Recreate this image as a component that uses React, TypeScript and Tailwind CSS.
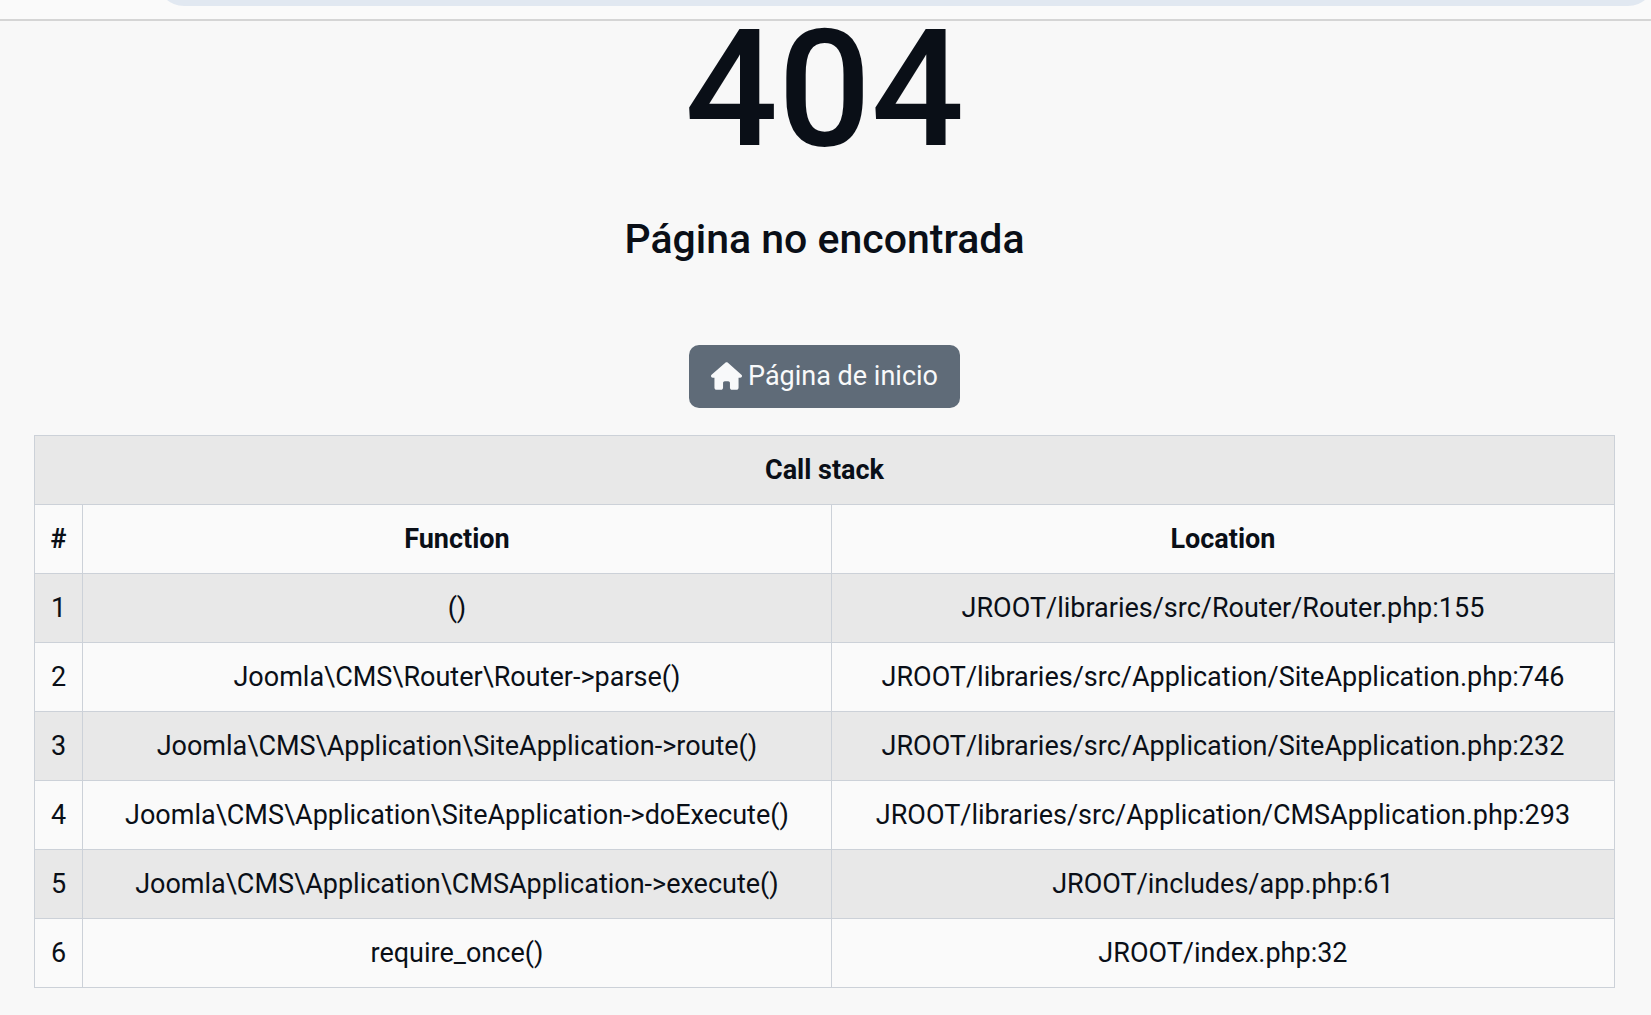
import { FaHouse } from "react-icons/fa6";

const frames = [
  ["()", "JROOT/libraries/src/Router/Router.php:155"],
  ["Joomla\\CMS\\Router\\Router->parse()", "JROOT/libraries/src/Application/SiteApplication.php:746"],
  ["Joomla\\CMS\\Application\\SiteApplication->route()", "JROOT/libraries/src/Application/SiteApplication.php:232"],
  ["Joomla\\CMS\\Application\\SiteApplication->doExecute()", "JROOT/libraries/src/Application/CMSApplication.php:293"],
  ["Joomla\\CMS\\Application\\CMSApplication->execute()", "JROOT/includes/app.php:61"],
  ["require_once()", "JROOT/index.php:32"],
];

const cell = "border border-[#ccd1d8] py-3";

export default function App() {
  return (
    <div className="min-h-screen bg-[#f8f8f8] font-[Roboto,sans-serif] text-[27px] leading-[44px] text-[#0a0f17]">
      <div className="flex h-[21px] items-start overflow-hidden border-b-2 border-[#d5d5d5] bg-[#fafafa] pl-[157px]">
        <div className="-mt-12 -mr-1 h-[54px] grow rounded-full bg-[#e1e8f1]" />
      </div>
      <main className="flex flex-col items-center pr-9 pb-7 pl-[34px] text-center">
        <h1 className="text-[164px] leading-[136px] font-medium">404</h1>
        <h2 className="mt-[57px] text-[41px] leading-[50px] font-medium">Página no encontrada</h2>
        <a href="#" className="mt-[81px] flex h-[63px] items-center gap-1.5 rounded-[10px] bg-[#5f6b78] px-[22px] pb-0.5 text-[#f8f9fa]">
          <FaHouse className="h-7 w-[31px]" />
          Página de inicio
        </a>
        <table className="mt-[27px] w-full table-fixed border-collapse">
          <colgroup>
            <col className="w-12" />
            <col className="w-[47.4%]" />
            <col />
          </colgroup>
          <thead>
            <tr className="bg-[#e8e8e8]">
              <th colSpan={3} className={cell}>Call stack</th>
            </tr>
            <tr className="bg-[#fafafa]">
              <th scope="col" className={cell}>#</th>
              <th scope="col" className={cell}>Function</th>
              <th scope="col" className={cell}>Location</th>
            </tr>
          </thead>
          <tbody>
            {frames.map(([fn, location], i) => (
              <tr key={i} className="odd:bg-[#e8e8e8] even:bg-[#fafafa]">
                <td className={cell}>{i + 1}</td>
                <td className={cell}>{fn}</td>
                <td className={cell}>{location}</td>
              </tr>
            ))}
          </tbody>
        </table>
      </main>
    </div>
  );
}
